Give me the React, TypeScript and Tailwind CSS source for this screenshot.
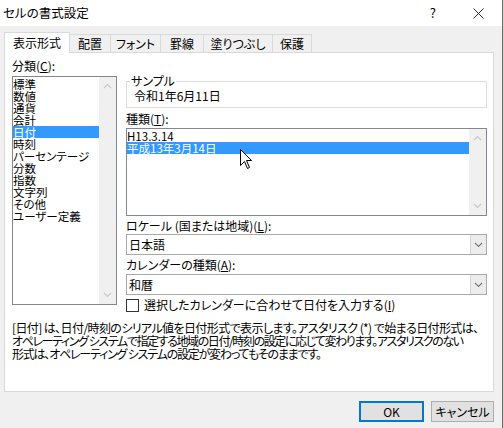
import React from "react";

const categories = [
  "標準",
  "数値",
  "通貨",
  "会計",
  "日付",
  "時刻",
  "パーセンテージ",
  "分数",
  "指数",
  "文字列",
  "その他",
  "ユーザー定義",
];

const tabs = [
  { label: "表示形式", w: "w-[66px]" },
  { label: "配置", w: "w-[41px]" },
  { label: "フォント", w: "w-[50px]" },
  { label: "罫線", w: "w-[43px]" },
  { label: "塗りつぶし", w: "w-[69px]" },
  { label: "保護", w: "w-[39px]" },
];

function Chevron({ up = false, className = "" }: { up?: boolean; className?: string }) {
  return (
    <svg width="9" height="6" viewBox="0 0 9 6" className={className}>
      <polyline
        points={up ? "1,5 4.5,1.5 8,5" : "1,1 4.5,4.5 8,1"}
        fill="none"
        stroke="currentColor"
        strokeWidth="1.2"
      />
    </svg>
  );
}

function ScrollTrack() {
  return (
    <div className="flex w-[17px] flex-col items-center justify-between bg-[#f0f0f0] py-[6px] text-[#c8c8c8]">
      <Chevron up />
      <Chevron />
    </div>
  );
}

function Combo({ value }: { value: string }) {
  return (
    <div className="flex h-[21px] items-stretch border border-[#a9a9a9] bg-white">
      <div className="flex flex-1 items-center pl-[2px]">{value}</div>
      <div className="flex w-[16px] items-center justify-center border-l border-[#d4d4d4] bg-[#ececec] text-[#7a7a7a]">
        <Chevron />
      </div>
    </div>
  );
}

export default function App() {
  return (
    <div className="flex h-[428px] w-[503px] flex-col overflow-hidden border-r border-[#6e6e6e] bg-[#f0f0f0] font-['Noto_Sans_CJK_JP',sans-serif] text-[12px] leading-[14px] text-black [font-feature-settings:'palt']">
      {/* title bar */}
      <div className="flex h-[26px] items-center bg-white pl-[3px] text-[12.5px]">
        <span>セルの書式設定</span>
        <span className="ml-auto mr-[37px] text-[13px]">?</span>
        <svg width="11" height="11" viewBox="0 0 11 11" className="mr-[18px]">
          <path d="M0.5 0.5 L10.5 10.5 M10.5 0.5 L0.5 10.5" stroke="#222" strokeWidth="1" />
        </svg>
      </div>

      {/* tabs */}
      <div className="mt-[6px] flex h-[20px] items-end pl-[4px]">
        {tabs.map((t, i) =>
          i === 0 ? (
            <div
              key={t.label}
              className={`relative z-10 -mb-px flex h-[21px] items-center justify-center border border-b-0 border-[#d9d9d9] bg-white ${t.w}`}
            >
              {t.label}
            </div>
          ) : (
            <div
              key={t.label}
              className={`flex h-[18px] items-center justify-center border-t border-r border-[#d9d9d9] bg-[#f0f0f0] ${t.w}`}
            >
              {t.label}
            </div>
          )
        )}
      </div>

      {/* tab page */}
      <div className="mx-[4px] h-[340px] w-[490px] border border-[#d9d9d9] bg-white pl-[7px] pr-[5px]">
        <div className="flex gap-[9px]">
          {/* category column */}
          <div className="flex w-[105px] flex-col">
            <div className="flex h-[23px] items-end pb-[3px]">分類(<u>C</u>):</div>
            <div className="flex h-[229px] border border-[#828790]">
              <div className="flex-1 pt-[1px] text-[11.5px]">
                {categories.map((c) => (
                  <div
                    key={c}
                    className={`h-[12px] whitespace-nowrap leading-[12px] ${
                      c === "日付" ? "bg-[#3399ff] text-white" : ""
                    }`}
                  >
                    {c}
                  </div>
                ))}
              </div>
              <ScrollTrack />
            </div>
          </div>

          {/* right column */}
          <div className="flex w-[361px] flex-col">
            <div className="relative mt-[28px] flex h-[27px] items-center border border-[#dcdcdc] pl-[7px] pt-[2px]">
              <span className="absolute -top-[8px] left-[3px] bg-white px-[1px]">サンプル</span>
              令和1年6月11日
            </div>
            <div className="flex h-[20px] items-start pt-[4px]">種類(<u>T</u>):</div>
            <div className="relative flex h-[88px] border border-[#828790]">
              <div className="flex-1 pt-[1px] text-[11.5px]">
                <div className="h-[12px] leading-[12px]">H13.3.14</div>
                <div className="h-[12px] bg-[#3399ff] leading-[12px] text-white">平成13年3月14日</div>
              </div>
              <ScrollTrack />
              <svg
                width="13"
                height="21"
                viewBox="0 0 13 21"
                className="absolute left-[113px] top-[20px]"
              >
                <path
                  d="M0.5 0.5 L0.5 16.5 L4.5 12.5 L7.5 19.5 L9.5 18.5 L6.5 11.5 L11.5 11.5 Z"
                  fill="white"
                  stroke="black"
                  strokeWidth="1"
                  strokeLinejoin="round"
                />
              </svg>
            </div>
            <div className="flex h-[18px] items-start pt-[3px]">ロケール (国または地域)(<u>L</u>):</div>
            <Combo value="日本語" />
            <div className="flex h-[19px] items-start pt-[3px]">カレンダーの種類(<u>A</u>):</div>
            <Combo value="和暦" />
            <div className="mt-[3px] flex h-[14px] items-center gap-[5px]">
              <div className="h-[13px] w-[13px] border border-[#333] bg-white" />
              <span>
                選択したカレンダーに合わせて日付を入力する(<u>I</u>)
              </span>
            </div>
          </div>
        </div>

        <div className="mt-[9px] whitespace-nowrap leading-[13px]">
          <div className="tracking-[-0.6px]">
            [日付] は、日付/時刻のシリアル値を日付形式で表示します。アスタリスク (*) で始まる日付形式は、
          </div>
          <div className="tracking-[-1.4px]">
            オペレーティング システムで指定する地域の日付/時刻の設定に応じて変わります。アスタリスクのない
          </div>
          <div className="tracking-[-1.2px]">
            形式は、オペレーティング システムの設定が変わってもそのままです。
          </div>
        </div>
      </div>

      {/* buttons */}
      <div className="mt-[9px] flex justify-end gap-[7px] pr-[8px]">
        <button className="flex h-[21px] w-[65px] items-center justify-center border-2 border-[#0078d7] bg-[#e1e1e1]">
          OK
        </button>
        <button className="flex h-[21px] w-[63px] items-center justify-center border border-[#adadad] bg-[#e1e1e1]">
          キャンセル
        </button>
      </div>
    </div>
  );
}
